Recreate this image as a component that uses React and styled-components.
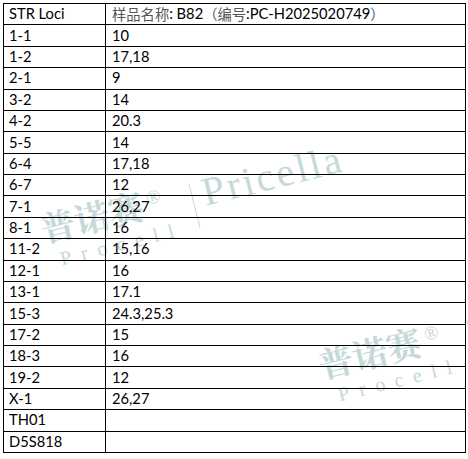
import React from "react";
import styled, { createGlobalStyle } from "styled-components";

const GlobalStyle = createGlobalStyle`
  html, body {
    margin: 0;
    padding: 0;
    background: #ffffff;
  }
  body {
    font-family: Lato, "Noto Sans", "Noto Sans CJK SC", sans-serif;
    color: #000;
  }
`;

const Page = styled.div`
  position: relative;
  width: 468px;
  height: 459px;
  padding: 3px 0 0 3px;
  box-sizing: border-box;
  overflow: hidden;
`;

const WatermarkLayer = styled.svg`
  position: absolute;
  left: 0;
  top: 0;
  width: 468px;
  height: 459px;
  pointer-events: none;
  z-index: 0;
`;

const Table = styled.div`
  position: relative;
  z-index: 1;
  display: grid;
  grid-template-columns: 102px 1fr;
  grid-auto-rows: 21.38px;
  width: 463px;
  box-sizing: border-box;
  border-top: 1px solid #000;
  border-left: 1px solid #000;
`;

const Cell = styled.div`
  display: flex;
  align-items: center;
  box-sizing: border-box;
  border-right: 1px solid #000;
  border-bottom: 1px solid #000;
  padding: 0 0 1px ${(p) => (p.$first ? "5px" : "6px")};
  font-size: 14.7px;
  line-height: 1;
  white-space: nowrap;
  color: #000;
`;

const Cjk = styled.span`
  font-family: "Noto Sans CJK SC", sans-serif;
  font-size: 14.3px;
  color: #555555;
`;

const rows = [
  ["1-1", "10"],
  ["1-2", "17,18"],
  ["2-1", "9"],
  ["3-2", "14"],
  ["4-2", "20.3"],
  ["5-5", "14"],
  ["6-4", "17,18"],
  ["6-7", "12"],
  ["7-1", "26,27"],
  ["8-1", "16"],
  ["11-2", "15,16"],
  ["12-1", "16"],
  ["13-1", "17.1"],
  ["15-3", "24.3,25.3"],
  ["17-2", "15"],
  ["18-3", "16"],
  ["19-2", "12"],
  ["X-1", "26,27"],
  ["TH01", ""],
  ["D5S818", ""],
];

const WM_COLOR = "#c4d9d9";

function Mark({ x, y }) {
  return (
    <g transform={`translate(${x},${y}) rotate(-14)`} fill={WM_COLOR}>
      <text
        x="0"
        y="-4"
        fontSize="35"
        fontWeight="700"
        fontFamily='"Noto Serif CJK SC", "Noto Sans CJK SC", serif'
      >
        普诺赛
      </text>
      <text x="110" y="-16" fontSize="19" fontFamily='"Liberation Serif", serif'>
        ®
      </text>
      <line x1="155" y1="-27" x2="155" y2="19" stroke={WM_COLOR} strokeWidth="1" />
      <text
        x="166"
        y="-1"
        fontSize="40"
        letterSpacing="2.8"
        fontFamily='"Liberation Serif", "DejaVu Serif", serif'
      >
        Pricella
      </text>
      <text
        x="12"
        y="22"
        fontSize="20"
        letterSpacing="10"
        fontFamily='"Liberation Serif", "DejaVu Serif", serif'
      >
        Procell
      </text>
    </g>
  );
}

export default function App() {
  return (
    <>
      <GlobalStyle />
      <Page>
        <WatermarkLayer viewBox="0 0 468 459">
          <Mark x={45} y={247} />
          <Mark x={323} y={383} />
        </WatermarkLayer>
        <Table>
          <Cell $first>STR Loci</Cell>
          <Cell>
            <Cjk>样品名称</Cjk>: B82<Cjk>（编号</Cjk>:PC-H2025020749<Cjk>）</Cjk>
          </Cell>
          {rows.map(([locus, value]) => (
            <React.Fragment key={locus}>
              <Cell $first>{locus}</Cell>
              <Cell>{value}</Cell>
            </React.Fragment>
          ))}
        </Table>
      </Page>
    </>
  );
}
